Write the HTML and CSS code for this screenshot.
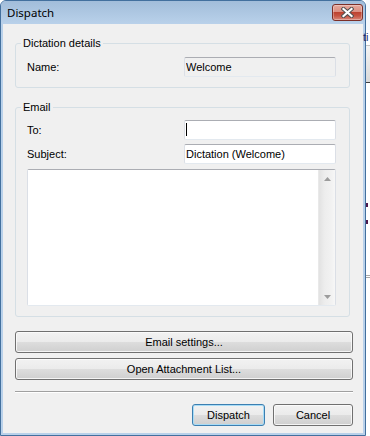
FILE: index.html
```html
<!DOCTYPE html>
<html lang="en">
<head>
  <meta charset="UTF-8" />
  <meta name="viewport" content="width=device-width, initial-scale=1.0" />
  <title>Dispatch</title>
  <link rel="stylesheet" href="styles.css">
</head>
<body>
  <div class="window">
    <div class="titlebar">
      <span class="title">Dispatch</span>
      <button class="close" title="Close">
        <svg width="13" height="11" viewBox="0 0 13 11">
          <path d="M2.5 2 L10.5 9 M10.5 2 L2.5 9" stroke="#505050" stroke-width="4.2" stroke-linecap="square" />
          <path d="M2.5 2 L10.5 9 M10.5 2 L2.5 9" stroke="#ffffff" stroke-width="2.2" stroke-linecap="square" />
        </svg>
      </button>
    </div>

    <div class="client">
      <fieldset class="group details">
        <legend>Dictation details</legend>
        <div class="row">
          <label>Name:</label>
          <input class="field readonly" value="Welcome" readonly />
        </div>
      </fieldset>

      <fieldset class="group email">
        <legend>Email</legend>
        <div class="row">
          <label for="to">To:</label>
          <div class="field-wrap">
            <input id="to" class="field" />
            <span class="caret"></span>
          </div>
        </div>
        <div class="row next">
          <label for="subject">Subject:</label>
          <input id="subject" class="field" value="Dictation (Welcome)" />
        </div>
        <div class="memo">
          <textarea></textarea>
          <div class="vscroll">
            <span class="arrow">
              <svg width="7" height="4" viewBox="0 0 7 4"><path d="M3.5 0 L7 4 L0 4 Z" fill="#9c9c9c" /></svg>
            </span>
            <span class="arrow">
              <svg width="7" height="4" viewBox="0 0 7 4"><path d="M0 0 L7 0 L3.5 4 Z" fill="#9c9c9c" /></svg>
            </span>
          </div>
        </div>
      </fieldset>

      <button class="btn wide first">Email settings...</button>
      <button class="btn wide">Open Attachment List...</button>

      <hr class="sep" />

      <div class="actions">
        <button class="btn default">Dispatch</button>
        <button class="btn cancel">Cancel</button>
      </div>
    </div>
  </div>

  <!-- edge of the window behind -->
  <div class="behind">
    <div class="b-top"></div>
    <div class="b-text">ti</div>
    <div class="b-bar"></div>
    <div class="b-space"></div>
    <div class="b-mark"></div>
    <div class="b-space small"></div>
    <div class="b-mark"></div>
    <div class="b-space mid"></div>
    <div class="b-line"></div>
  </div>
</body>
</html>
```

FILE: styles.css
```css
* {
  box-sizing: border-box;
}
body {
  margin: 0;
  width: 370px;
  height: 436px;
  display: flex;
  overflow: hidden;
  font-family: "Liberation Sans", Arial, sans-serif;
  font-size: 11px;
  color: #000;
  background: #fff;
}
.window {
  width: 366px;
  height: 436px;
  display: flex;
  flex-direction: column;
  border: 1px solid #43709e;
  border-radius: 6px 6px 0 0;
  background: #b9d1ea;
}
.titlebar {
  height: 23px;
  display: flex;
  justify-content: space-between;
  align-items: flex-start;
  padding: 0 2px 0 6px;
  border-radius: 5px 5px 0 0;
  background: linear-gradient(#a2bdda, #b9d1ea);
}
.title {
  margin-top: 4px;
  font-family: "Noto Sans", sans-serif;
  font-size: 11.5px;
  line-height: 15px;
}
.close {
  margin-top: 3px;
  width: 31px;
  height: 17px;
  padding: 0;
  display: flex;
  align-items: center;
  justify-content: center;
  border: 1px solid #7c2f28;
  border-radius: 3px;
  background: linear-gradient(#e6a89c, #dc9083 44%, #bd4331 50%, #c65442 72%, #d9887a);
  box-shadow: inset 0 0 0 1px rgba(255, 255, 255, 0.3);
}
.client {
  flex: 1;
  margin: 0 2px 2px;
  background: #f0f0f0;
}

/* group boxes */
.group {
  width: 335px;
  margin: 13px 0 0 12px;
  padding: 7px 13px 10px 11px;
  min-width: 0;
  border: 1px solid #d5dfe5;
  border-radius: 3px;
}
.group.email {
  padding-top: 6px;
}
.group legend {
  margin-left: -6px;
  padding: 0 2px;
  line-height: 13px;
}
.row {
  display: grid;
  grid-template-columns: 157px 152px;
  align-items: center;
}
.row.next {
  margin-top: 4px;
}
.row label {
  line-height: 13px;
}
.field {
  width: 152px;
  height: 20px;
  margin: 0;
  padding: 0 1px;
  font: inherit;
  color: #000;
  background: #fff;
  border: 1px solid #dbdfe6;
  border-top-color: #abadb3;
  border-bottom-color: #e3e9ef;
  border-radius: 2px;
  outline: none;
}
.field.readonly {
  background: #f0f0f0;
}
.field-wrap {
  position: relative;
  height: 20px;
}
.caret {
  position: absolute;
  left: 2px;
  top: 3px;
  width: 1px;
  height: 13px;
  background: #000;
}
.memo {
  display: flex;
  height: 137px;
  margin-top: 5px;
  background: #fff;
  border: 1px solid #dbdfe6;
  border-top-color: #abadb3;
  border-bottom-color: #e3e9ef;
  border-radius: 2px;
}
.memo textarea {
  flex: 1;
  border: none;
  outline: none;
  resize: none;
  padding: 0;
  font: inherit;
  background: #fff;
}
.vscroll {
  width: 17px;
  display: flex;
  flex-direction: column;
  justify-content: space-between;
  border-left: 1px solid #e9e9e9;
  background: linear-gradient(to right, #e2e2e2, #ededed 35%, #f2f2f2 80%, #f7f7f7);
}
.arrow {
  height: 17px;
  display: flex;
  align-items: center;
  justify-content: center;
}

/* buttons */
.btn {
  height: 22px;
  padding: 0;
  font: inherit;
  color: #000;
  border: 1px solid #707070;
  border-radius: 3px;
  background: linear-gradient(#f2f2f2, #ebebeb 50%, #dddddd 51%, #cfcfcf);
  box-shadow: inset 0 0 0 1px rgba(252, 252, 252, 0.8);
}
.btn.wide {
  display: block;
  width: 338px;
  margin: 5px 0 0 12px;
}
.btn.wide.first {
  margin-top: 14px;
}
.sep {
  width: 338px;
  height: 2px;
  margin: 11px 0 0 12px;
  border: none;
  border-top: 1px solid #a0a0a0;
  border-bottom: 1px solid #fff;
}
.actions {
  display: flex;
  justify-content: flex-end;
  gap: 8px;
  margin-top: 11px;
  padding-right: 10px;
}
.btn.default {
  width: 73px;
  border-color: #3c7fb1;
  box-shadow: inset 0 0 0 1px #a8dcf6;
}
.btn.cancel {
  width: 80px;
}

/* the window behind, peeking out on the right */
.behind {
  width: 4px;
  display: flex;
  flex-direction: column;
  background: #fff;
}
.b-top {
  height: 30px;
  background: #f4f8fc;
}
.b-text {
  height: 15px;
  margin-left: -3px;
  color: #1c2a6a;
  line-height: 15px;
}
.b-bar {
  height: 38px;
  border-top: 1px solid #c4c4c4;
  border-bottom: 1px solid #404040;
  background: linear-gradient(#f4f4f4, #d9d9d9);
}
.b-space {
  height: 120px;
}
.b-space.small {
  height: 13px;
}
.b-space.mid {
  height: 51px;
}
.b-mark {
  height: 4px;
  width: 2px;
  background: #4d1a4d;
}
.b-line {
  height: 3px;
  border-top: 1px solid #a8a8a8;
  border-bottom: 1px solid #a8a8a8;
}
```
